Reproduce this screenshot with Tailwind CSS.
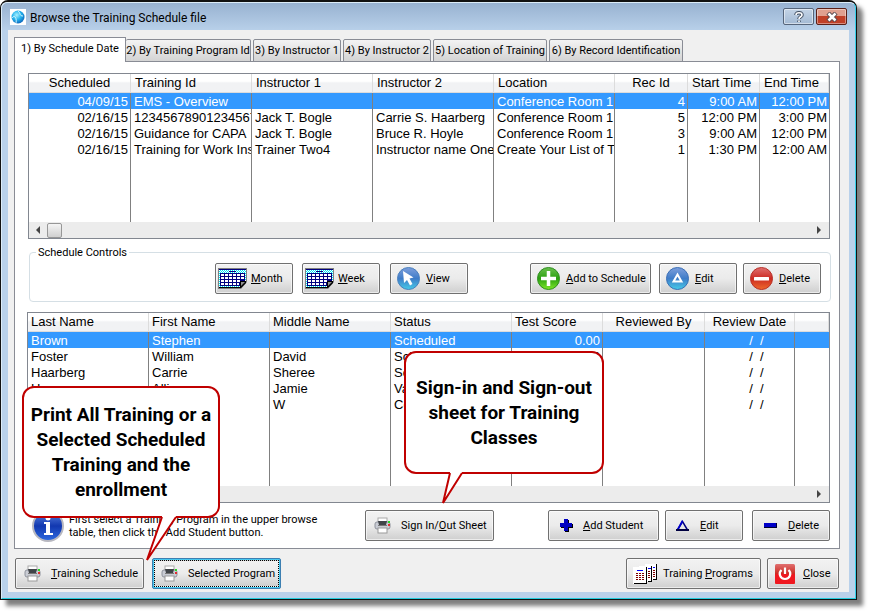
<!DOCTYPE html>
<html lang="en">
<head>
  <meta charset="UTF-8">
  <meta name="viewport" content="width=device-width, initial-scale=1.0">
  <title>Browse the Training Schedule file</title>
  <script src="https://cdn.jsdelivr.net/npm/@tailwindcss/browser@4"></script>
</head>
<body class="bg-white font-['Roboto','Liberation_Sans',sans-serif] text-[11px] leading-[13px] text-black">

  <!-- Shared icons -->
  <svg class="absolute size-0">
    <defs>
      <linearGradient id="gBlue" x1="0" y1="0" x2="0" y2="1"><stop offset="0" stop-color="#7e9fdc"/><stop offset=".5" stop-color="#3f7cc8"/><stop offset="1" stop-color="#45cbe8"/></linearGradient>
      <linearGradient id="gGreen" x1="0" y1="0" x2="0" y2="1"><stop offset="0" stop-color="#6bc04f"/><stop offset=".5" stop-color="#2ba010"/><stop offset="1" stop-color="#7fe82a"/></linearGradient>
      <linearGradient id="gRed" x1="0" y1="0" x2="0" y2="1"><stop offset="0" stop-color="#e07070"/><stop offset=".5" stop-color="#cc2a22"/><stop offset="1" stop-color="#ee6a2c"/></linearGradient>
      <linearGradient id="gInfo" x1="0" y1="0" x2="0" y2="1"><stop offset="0" stop-color="#5d86e0"/><stop offset=".5" stop-color="#1238b0"/><stop offset="1" stop-color="#2f6be0"/></linearGradient>
      <radialGradient id="gGlobe" cx=".4" cy=".35" r=".7"><stop offset="0" stop-color="#a8f0ff"/><stop offset=".5" stop-color="#25b4ee"/><stop offset="1" stop-color="#0a5fb8"/></radialGradient>
      <pattern id="dots" width="2" height="2" patternUnits="userSpaceOnUse"><rect width="2" height="2" fill="#fff"/><rect width="1" height="1" fill="#00e8f8"/><rect x="1" y="1" width="1" height="1" fill="#00e8f8"/></pattern>
    </defs>
    <symbol id="calendar" viewBox="0 0 29 21">
      <path d="M0 0H29V14L23 21H0Z" fill="#808080"/>
      <path d="M1 1H28V14L22 20H1Z" fill="url(#dots)"/>
      <path d="M1 1H28V2H1Z" fill="#000080"/>
      <path d="M11 3H18V4H11Z" fill="#000080"/>
      <path d="M2 5H27V13H22V18H2Z" fill="#000080"/>
      <path d="M3 6h3v2H3zM7 6h3v2H7zM11 6h3v2h-3zM15 6h3v2h-3zM19 6h3v2h-3zM23 6h3v2h-3zM3 9h3v2H3zM7 9h3v2H7zM11 9h3v2h-3zM15 9h3v2h-3zM19 9h3v2h-3zM23 9h3v2h-3zM3 12h3v2H3zM7 12h3v2H7zM11 12h3v2h-3zM15 12h3v2h-3zM19 12h3v2h-3zM3 15h3v2H3zM7 15h3v2H7zM11 15h3v2h-3zM15 15h3v2h-3zM19 15h2v2h-2z" fill="#fff"/>
      <path d="M1 19H22V20H1ZM22 13H28V15L23 20H22Z" fill="#000"/>
      <path d="M23 14H27L23 18Z" fill="#909090"/>
    </symbol>
    <symbol id="printer" viewBox="0 0 17 17">
      <rect x="4" y="1" width="9" height="4" fill="#fff" stroke="#aaa"/>
      <rect x="1" y="5" width="15" height="7" rx="2" fill="#c9ccd4" stroke="#8e929c"/>
      <path d="M4 4H13L12 8H5Z" fill="#404448"/>
      <path d="M4 8H13V9H4Z" fill="#777"/>
      <rect x="4" y="11" width="9" height="5" fill="#fff" stroke="#999"/>
      <rect x="14" y="4" width="2" height="2" fill="#28d828"/><rect x="14" y="7" width="2" height="2" fill="#e03030"/>
    </symbol>
    <symbol id="edit" viewBox="0 0 23 23">
      <circle cx="11.500" cy="11.500" r="11" fill="url(#gBlue)" stroke="#3b6fb5"/>
      <path d="M11.500 7.500L15.500 14.500H7.500Z" fill="none" stroke="#fff" stroke-width="2"/>
    </symbol>
    <symbol id="delete" viewBox="0 0 23 23">
      <circle cx="11.500" cy="11.500" r="11" fill="url(#gRed)" stroke="#b83028"/>
      <rect x="4" y="10" width="15" height="3.500" rx=".5" fill="#fff"/>
    </symbol>
  </svg>

  <div class="relative mr-4 mb-4 rounded-t-lg border border-t-2 border-[#111] bg-[#b9d1ea] shadow-[6px_6px_4px_0px_rgba(0,0,0,0.5)]">
    <div class="rounded-t-md border border-[#dcecf8] border-r-[#35d0ea] border-b-[#22ccdd] bg-gradient-to-b from-[#98b2d1] to-[#b9d1ea] to-[28px] px-1.5 pb-1.5">

      <!-- Title bar -->
      <header class="flex h-[27px] items-center">
        <svg class="ml-0.5 size-4 bg-white" viewBox="0 0 16 16"><circle cx="8" cy="8" r="6.500" fill="url(#gGlobe)"/><path d="M2 9C5 5 7 10 6 14M8 2C11 4 9 7 13 7" stroke="#d8f8ff" fill="none"/></svg>
        <h1 class="ml-1 grow pt-0.5 text-[12px] leading-4">Browse the Training Schedule file</h1>
        <div class="mr-0.5 flex gap-0.5">
          <button aria-label="Help" class="flex h-[17px] w-[31px] items-center justify-center rounded-xs border border-[#56657a] bg-gradient-to-b from-[#c4d4e6] to-[#a3bad4] inset-ring inset-ring-white/50">
            <svg class="h-3 w-2.5" viewBox="0 0 10 12"><path d="M2 4C2 1 8 1 8 4C8 6 5 5.500 5 8M5 9.500V11" fill="none" stroke="#475568" stroke-width="3.600"/><path d="M2 4C2 1 8 1 8 4C8 6 5 5.500 5 8M5 9.500V11" fill="none" stroke="#fff" stroke-width="1.600"/></svg>
          </button>
          <button aria-label="Close window" class="flex h-[17px] w-[31px] items-center justify-center rounded-xs border border-[#5b2018] bg-gradient-to-b from-[#e0a090] from-45% to-[#c04028] to-50% inset-ring inset-ring-white/40">
            <svg class="h-2.5 w-3" viewBox="0 0 12 10"><path d="M2 1L10 9M10 1L2 9" stroke="#5a4a50" stroke-width="4.500"/><path d="M2.500 1.500L9.500 8.500M9.500 1.500L2.500 8.500" stroke="#fff" stroke-width="2.500"/></svg>
          </button>
        </div>
      </header>

      <main class="bg-[#f0f0f0] px-1.5 pt-[7px] pb-[3px]">

        <!-- Tabs -->
        <div role="tablist" class="relative z-10 -mb-px flex h-[25px] items-end gap-0.5">
          <button role="tab" aria-selected="true" class="-mr-0.5 h-[25px] w-[112px] border border-b-0 border-[#898c95] bg-white pb-1 whitespace-nowrap">1) By Schedule Date</button>
          <button role="tab" class="h-[23px] w-[125px] rounded-t-xs border border-l-0 border-[#898c95] bg-gradient-to-b from-[#f3f3f3] to-[#d4d4d4] whitespace-nowrap">2) By Training Program Id</button>
          <button role="tab" class="h-[23px] w-[88px] rounded-t-xs border border-[#898c95] bg-gradient-to-b from-[#f3f3f3] to-[#d4d4d4] whitespace-nowrap">3) By Instructor 1</button>
          <button role="tab" class="h-[23px] w-[88px] rounded-t-xs border border-[#898c95] bg-gradient-to-b from-[#f3f3f3] to-[#d4d4d4] whitespace-nowrap">4) By Instructor 2</button>
          <button role="tab" class="h-[23px] w-[114px] rounded-t-xs border border-[#898c95] bg-gradient-to-b from-[#f3f3f3] to-[#d4d4d4] whitespace-nowrap">5) Location of Training</button>
          <button role="tab" class="h-[23px] w-[134px] rounded-t-xs border border-[#898c95] bg-gradient-to-b from-[#f3f3f3] to-[#d4d4d4] whitespace-nowrap">6) By Record Identification</button>
        </div>

        <section class="mr-[3px] border border-[#898c95] bg-white pt-[11px] pr-[9px] pb-[7px] pl-[13px]">

          <!-- Schedule browse -->
          <div class="border border-[#828790]">
            <table class="h-[148px] w-full table-fixed border-separate border-spacing-0 font-['Liberation_Sans',Arial,sans-serif] text-[13px] leading-4">
              <colgroup><col class="w-[102px]"><col class="w-[121px]"><col class="w-[121px]"><col class="w-[121px]"><col class="w-[121px]"><col class="w-[73px]"><col class="w-[72px]"><col></colgroup>
              <thead>
                <tr class="h-[19px] text-left *:border-r *:border-b *:border-[#dcdcdc] *:bg-gradient-to-b *:from-white *:from-40% *:to-[#f1f2f4] *:to-50% *:p-0 *:pl-1 *:font-normal *:whitespace-nowrap">
                  <th class="pl-0! text-center">Scheduled</th><th>Training Id</th><th>Instructor 1</th><th>Instructor 2</th><th>Location</th><th class="pl-0! text-center">Rec Id</th><th>Start Time</th><th>End Time</th>
                </tr>
              </thead>
              <tbody class="[&_td]:overflow-hidden [&_td]:border-r [&_td]:border-[#808080] [&_td]:p-0 [&_td]:pt-px [&_td]:pr-0.5 [&_td]:pl-[3px] [&_td]:leading-[15px] [&_td]:whitespace-nowrap [&_td:last-child]:border-r-0">
                <tr class="h-4 bg-[#3399ff] text-white"><td class="text-right">04/09/15</td><td>EMS - Overview</td><td></td><td></td><td>Conference Room 1</td><td class="text-right">4</td><td class="text-right">9:00 AM</td><td class="text-right">12:00 PM</td></tr>
                <tr class="h-4"><td class="text-right">02/16/15</td><td>12345678901234567</td><td>Jack T. Bogle</td><td>Carrie S. Haarberg</td><td>Conference Room 1</td><td class="text-right">5</td><td class="text-right">12:00 PM</td><td class="text-right">3:00 PM</td></tr>
                <tr class="h-4"><td class="text-right">02/16/15</td><td>Guidance for CAPA</td><td>Jack T. Bogle</td><td>Bruce R. Hoyle</td><td>Conference Room 1</td><td class="text-right">3</td><td class="text-right">9:00 AM</td><td class="text-right">12:00 PM</td></tr>
                <tr class="h-4"><td class="text-right">02/16/15</td><td>Training for Work Ins</td><td>Trainer Two4</td><td>Instructor name One</td><td>Create Your List of T</td><td class="text-right">1</td><td class="text-right">1:30 PM</td><td class="text-right">12:00 AM</td></tr>
                <tr><td></td><td></td><td></td><td></td><td></td><td></td><td></td><td></td></tr>
              </tbody>
            </table>
            <div class="flex h-4 items-center bg-[#ececec] px-1.5">
              <svg class="size-2" viewBox="0 0 8 8"><path d="M5 0V8L1 4Z" fill="#444"/></svg>
              <span class="ml-1 h-[15px] w-[15px] rounded-xs border border-[#979797] bg-gradient-to-b from-[#f5f5f5] to-[#d0d0d0]"></span>
              <svg class="ml-auto size-2" viewBox="0 0 8 8"><path d="M2 0V8L6 4Z" fill="#444"/></svg>
            </div>
          </div>

          <fieldset class="-mr-px ml-px mt-[7px] flex h-[56px] items-start rounded border border-[#d5dfe5] pt-1 pr-[9px] pl-[185px]">
            <legend class="-ml-[179px] px-0.5 leading-[13px]">Schedule Controls</legend>
            <button class="flex h-[31px] w-[78px] items-center gap-1 rounded-xs border border-[#707070] bg-gradient-to-b from-[#f2f2f2] via-[#ebebeb] to-[#cfcfcf] pl-0.5 inset-ring inset-ring-white/60"><svg class="h-[21px] w-[29px]"><use href="#calendar"/></svg><span><u>M</u>onth</span></button>
            <button class="ml-[9px] flex h-[31px] w-[78px] items-center gap-1 rounded-xs border border-[#707070] bg-gradient-to-b from-[#f2f2f2] via-[#ebebeb] to-[#cfcfcf] pl-0.5 inset-ring inset-ring-white/60"><svg class="h-[21px] w-[29px]"><use href="#calendar"/></svg><span><u>W</u>eek</span></button>
            <button class="ml-[10px] flex h-[31px] w-[78px] items-center gap-1.5 rounded-xs border border-[#707070] bg-gradient-to-b from-[#f2f2f2] via-[#ebebeb] to-[#cfcfcf] pl-1.5 inset-ring inset-ring-white/60">
              <svg class="size-[23px]" viewBox="0 0 23 23"><circle cx="11.500" cy="11.500" r="11" fill="url(#gBlue)" stroke="#4a80bd"/><path d="M6 4L16.500 10.500L12.500 11.500L15.500 17L13 18.500L10 13L7 16Z" fill="#fff"/></svg>
              <span><u>V</u>iew</span>
            </button>
            <button class="ml-auto flex h-[31px] w-[121px] items-center gap-1.5 rounded-xs border border-[#707070] bg-gradient-to-b from-[#f2f2f2] via-[#ebebeb] to-[#cfcfcf] pl-1.5 whitespace-nowrap inset-ring inset-ring-white/60">
              <svg class="size-[23px]" viewBox="0 0 23 23"><circle cx="11.500" cy="11.500" r="11" fill="url(#gGreen)" stroke="#2f8f20"/><path d="M11.500 4V19M4 11.500H19" stroke="#fff" stroke-width="3.500"/></svg>
              <span><u>A</u>dd to Schedule</span>
            </button>
            <button class="ml-2 flex h-[31px] w-[78px] items-center gap-1.5 rounded-xs border border-[#707070] bg-gradient-to-b from-[#f2f2f2] via-[#ebebeb] to-[#cfcfcf] pl-1.5 inset-ring inset-ring-white/60"><svg class="size-[23px]"><use href="#edit"/></svg><span><u>E</u>dit</span></button>
            <button class="ml-1.5 flex h-[31px] w-[78px] items-center gap-1.5 rounded-xs border border-[#707070] bg-gradient-to-b from-[#f2f2f2] via-[#ebebeb] to-[#cfcfcf] pl-1.5 inset-ring inset-ring-white/60"><svg class="size-[23px]"><use href="#delete"/></svg><span><u>D</u>elete</span></button>
          </fieldset>

          <!-- Enrolled students -->
          <div class="mt-[10px] -ml-px border border-[#828790]">
            <table class="h-[173px] w-full table-fixed border-separate border-spacing-0 font-['Liberation_Sans',Arial,sans-serif] text-[13px] leading-4">
              <colgroup><col class="w-[121px]"><col class="w-[121px]"><col class="w-[121px]"><col class="w-[121px]"><col class="w-[91px]"><col class="w-[102px]"><col class="w-[90px]"><col></colgroup>
              <thead>
                <tr class="h-[19px] text-left *:border-r *:border-b *:border-[#dcdcdc] *:bg-gradient-to-b *:from-white *:from-40% *:to-[#f1f2f4] *:to-50% *:p-0 *:pl-[3px] *:font-normal *:whitespace-nowrap">
                  <th>Last Name</th><th>First Name</th><th>Middle Name</th><th>Status</th><th>Test Score</th><th class="pl-0! text-center">Reviewed By</th><th class="pl-0! text-center">Review Date</th><th></th>
                </tr>
              </thead>
              <tbody class="[&_td]:overflow-hidden [&_td]:border-r [&_td]:border-[#808080] [&_td]:p-0 [&_td]:pt-px [&_td]:pr-0.5 [&_td]:pl-[3px] [&_td]:leading-[15px] [&_td]:whitespace-nowrap [&_td:last-child]:border-r-0">
                <tr class="h-4 bg-[#3399ff] text-white"><td>Brown</td><td>Stephen</td><td></td><td>Scheduled</td><td class="text-right">0.00</td><td></td><td class="pl-4! text-center">/&nbsp; /</td><td></td></tr>
                <tr class="h-4"><td>Foster</td><td>William</td><td>David</td><td>Scheduled</td><td class="text-right">0.00</td><td></td><td class="pl-4! text-center">/&nbsp; /</td><td></td></tr>
                <tr class="h-4"><td>Haarberg</td><td>Carrie</td><td>Sheree</td><td>Scheduled</td><td></td><td></td><td class="pl-4! text-center">/&nbsp; /</td><td></td></tr>
                <tr class="h-4"><td>Hoover</td><td>Allison</td><td>Jamie</td><td>Vacation</td><td></td><td></td><td class="pl-4! text-center">/&nbsp; /</td><td></td></tr>
                <tr class="h-4"><td></td><td></td><td>W</td><td>Completed</td><td></td><td></td><td class="pl-4! text-center">/&nbsp; /</td><td></td></tr>
                <tr><td></td><td></td><td></td><td></td><td></td><td></td><td></td><td></td></tr>
              </tbody>
            </table>
            <div class="flex h-4 items-center justify-end bg-[#ececec] px-1.5">
              <svg class="size-2" viewBox="0 0 8 8"><path d="M2 0V8L6 4Z" fill="#444"/></svg>
            </div>
          </div>

          <div class="mt-[7px] flex h-[31px] items-center">
            <svg class="ml-1 size-8" viewBox="0 0 32 32"><circle cx="16" cy="16" r="15" fill="url(#gInfo)" stroke="#b8b8c0" stroke-width="2"/><circle cx="16" cy="8" r="2.500" fill="#fff"/><path d="M12 12H18V23H21V25H12V23H14V14H12Z" fill="#fff"/></svg>
            <p class="ml-[5px] w-[296px]">First select a Training Program in the upper browse<br>table, then click the Add Student button.</p>
            <button class="flex h-[31px] w-[129px] items-center gap-2.5 rounded-xs border border-[#707070] bg-gradient-to-b from-[#f2f2f2] via-[#ebebeb] to-[#cfcfcf] pl-2 whitespace-nowrap inset-ring inset-ring-white/60"><svg class="size-[17px]"><use href="#printer"/></svg><span>Sign In/<u>O</u>ut Sheet</span></button>
            <button class="ml-auto flex h-[31px] w-[111px] items-center gap-2.5 rounded-xs border border-[#707070] bg-gradient-to-b from-[#f2f2f2] via-[#ebebeb] to-[#cfcfcf] pl-[11px] whitespace-nowrap inset-ring inset-ring-white/60">
              <svg class="size-[13px]" viewBox="0 0 13 13"><path d="M5 1H9V5H13V9H9V13H5V9H1V5H5Z" fill="#000"/><path d="M4 0H8V4H12V8H8V12H4V8H0V4H4Z" fill="#0000c0"/></svg>
              <span><u>A</u>dd Student</span>
            </button>
            <button class="ml-1.5 flex h-[31px] w-[78px] items-center gap-[11px] rounded-xs border border-[#707070] bg-gradient-to-b from-[#f2f2f2] via-[#ebebeb] to-[#cfcfcf] pl-2.5 inset-ring inset-ring-white/60">
              <svg class="size-[13px]" viewBox="0 0 13 13"><path d="M6.500 1L13 12H0Z" fill="#000080"/><path d="M6.500 4L10 10H3Z" fill="#e8e8e8"/><path d="M0 10H13V12H0Z" fill="#000040"/><path d="M6 1L1 10H3L7 3Z" fill="#0000d0"/></svg>
              <span><u>E</u>dit</span>
            </button>
            <button class="ml-[9px] flex h-[31px] w-[78px] items-center gap-[11px] rounded-xs border border-[#707070] bg-gradient-to-b from-[#f2f2f2] via-[#ebebeb] to-[#cfcfcf] pl-[11px] inset-ring inset-ring-white/60">
              <svg class="h-[5px] w-[13px]" viewBox="0 0 13 5"><path d="M0 0H13V5H0Z" fill="#000030"/><path d="M0 0H12V4H0Z" fill="#0000c8"/></svg>
              <span><u>D</u>elete</span>
            </button>
          </div>
        </section>

        <footer class="mt-[9px] mr-1 ml-px flex">
          <button class="flex h-[31px] w-[129px] items-center gap-2.5 rounded-xs border border-[#707070] bg-gradient-to-b from-[#f2f2f2] via-[#ebebeb] to-[#cfcfcf] pl-2 whitespace-nowrap inset-ring inset-ring-white/60"><svg class="size-[17px]"><use href="#printer"/></svg><span><u>T</u>raining Schedule</span></button>
          <button class="ml-2 flex h-[31px] w-[129px] rounded-xs border border-[#3c7fb1] bg-[#48c8f0] p-px whitespace-nowrap"><span class="flex h-full w-full items-center gap-2.5 border border-dotted border-black bg-gradient-to-b from-[#f2f2f2] via-[#ebebeb] to-[#cfcfcf] pl-[6px]"><svg class="size-[17px]"><use href="#printer"/></svg><span>Selected Program</span></span></button>
          <button class="ml-auto flex h-[31px] w-[135px] items-center gap-[5px] rounded-xs border border-[#707070] bg-gradient-to-b from-[#f2f2f2] via-[#ebebeb] to-[#cfcfcf] pl-1.5 whitespace-nowrap inset-ring inset-ring-white/60">
            <svg class="h-5 w-[25px]" viewBox="0 0 25 20">
              <path d="M12 0H24V16H12Z" fill="#fff"/><path d="M23 0H24V16H20V15H23Z" fill="#000"/>
              <path d="M6 2H19V18H6Z" fill="#fff"/><path d="M18 2H19V18H15V17H18Z" fill="#000"/>
              <path d="M0 3H14V20H0Z" fill="#fff"/><path d="M13 3H14V20H1V19H13Z" fill="#000"/>
              <path d="M4 6H10V7H4ZM15 4H18V5H15ZM20 3H22V4H20Z" fill="#0000ff"/>
              <path d="M3 9.500H11M3 11.500H11M3 13.500H11M3 15.500H11M15 7.500H17M15 9.500H17M15 11.500H17M15 13.500H17M20 6.500H22M20 8.500H22M20 10.500H22M20 12.500H22" stroke="#800000" stroke-dasharray="2 1"/>
            </svg>
            <span>Training <u>P</u>rograms</span>
          </button>
          <button class="ml-1.5 flex h-[31px] w-[72px] items-center gap-2 rounded-xs border border-[#707070] bg-gradient-to-b from-[#f2f2f2] via-[#ebebeb] to-[#cfcfcf] pl-[7px] inset-ring inset-ring-white/60">
            <svg class="size-5" viewBox="0 0 20 20"><rect width="20" height="20" rx="1.500" fill="url(#gRed)"/><rect y="10" width="20" height="10" rx="1.500" fill="#f01820"/><path d="M6.500 6C3 9 5 15 10 15S17 9 13.500 6M10 3.500V10" fill="none" stroke="#fff" stroke-width="2.200"/></svg>
            <span><u>C</u>lose</span>
          </button>
        </footer>
      </main>
    </div>
  </div>

  <!-- Help callouts over the window -->
  <div class="absolute top-[386px] left-[22px] z-20 flex h-[132px] w-[198px] items-center justify-center rounded-xl border-2 border-[#c00000] bg-white text-center text-[19px] leading-[25px] font-bold">
    <p>Print All Training or a<br>Selected Scheduled<br>Training and the<br>enrollment</p>
    <svg class="absolute top-[127px] left-[121px] h-[48px] w-[36px]" viewBox="0 0 36 48"><path d="M17 0V3L2 45L31 3V0Z" fill="#fff"/><path d="M17 2L2 45L31 2" fill="none" stroke="#c00000" stroke-width="2"/></svg>
  </div>
  <div class="absolute top-[351px] left-[404px] z-20 flex h-[123px] w-[200px] items-center justify-center rounded-xl border-2 border-[#c00000] bg-white text-center text-[19px] leading-[25px] font-bold">
    <p>Sign-in and Sign-out<br>sheet for Training<br>Classes</p>
    <svg class="absolute top-[118px] left-[34px] h-[36px] w-[28px]" viewBox="0 0 28 36"><path d="M10 0V3L3 32L22 3V0Z" fill="#fff"/><path d="M10 2L3 32L22 2" fill="none" stroke="#c00000" stroke-width="2"/></svg>
  </div>

</body>
</html>
